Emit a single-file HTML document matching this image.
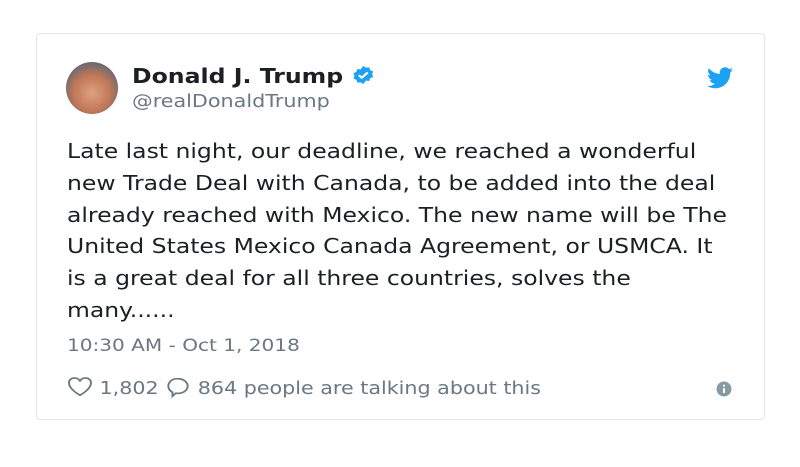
<!DOCTYPE html>
<html><head><style>
body{margin:0;width:800px;height:467px;background:#fff;font-family:"DejaVu Sans",sans-serif;position:relative;overflow:hidden}
.card{position:absolute;left:36px;top:33px;width:729px;height:387px;border:1px solid #e1e8ed;border-radius:4px;box-sizing:border-box}
.av{position:absolute;left:66px;top:62px;width:52px;height:52px;border-radius:50%;background:radial-gradient(circle at 50% 60%,#e0a080 0%,#c07858 45%,#6a6a70 75%,#8ab 100%)}
.s{transform:scaleX(1.18);transform-origin:0 0}
.name{position:absolute;left:132px;top:64px;font-size:20px;font-weight:bold;color:#1c2022;white-space:nowrap}
.handle{position:absolute;left:132px;top:91px;font-size:18px;color:#697882;white-space:nowrap;transform:scaleX(1.15)}
.body{position:absolute;left:67px;top:136px;font-size:20px;line-height:31.8px;color:#1c2022;white-space:nowrap}
.time{position:absolute;left:67px;top:336px;font-size:17px;color:#697882;white-space:nowrap}
.act{position:absolute;left:67px;top:375px;font-size:17.5px;color:#697882;white-space:nowrap}
</style></head><body>
<div class="card"></div>
<div class="av"></div>
<div class="name s">Donald J. Trump <svg width="20" height="22" viewBox="0 0 24 24" style="vertical-align:-3px"><path fill="#1da1f2" d="M12 1l2.6 2.2 3.4-.4 1 3.3 3 1.7-1 3.2 1 3.2-3 1.7-1 3.3-3.4-.4L12 23l-2.6-2.2-3.4.4-1-3.3-3-1.7 1-3.2-1-3.2 3-1.7 1-3.3 3.4.4z"/><path d="M7.5 12.3l3 3 6-6.3" stroke="#fff" stroke-width="2.4" fill="none"/></svg></div>
<div class="handle s" style="transform:scaleX(1.15)">@realDonaldTrump</div>
<svg style="position:absolute;left:707px;top:67px" width="26" height="22" viewBox="0 0 24 20"><path fill="#1da1f2" d="M24 2.4c-.9.4-1.8.6-2.8.8 1-.6 1.8-1.6 2.2-2.7-1 .6-2 1-3.1 1.2A4.9 4.9 0 0 0 11.9 6.2 14 14 0 0 1 1.7 1 4.9 4.9 0 0 0 3.2 7.6a4.9 4.9 0 0 1-2.2-.6c0 2.4 1.7 4.4 3.9 4.8-.7.2-1.5.2-2.2.1.6 2 2.4 3.4 4.6 3.4A9.9 9.9 0 0 1 0 17.3 14 14 0 0 0 7.5 19.5c9 0 14-7.5 14-14v-.6c1-.7 1.8-1.6 2.5-2.5z"/></svg>
<div class="body s" style="transform:scaleX(1.175)">Late last night, our deadline, we reached a wonderful<br>new Trade Deal with Canada, to be added into the deal<br>already reached with Mexico. The new name will be The<br>United States Mexico Canada Agreement, or USMCA. It<br>is a great deal for all three countries, solves the<br>many......</div>
<div class="time s">10:30 AM - Oct 1, 2018</div>
<div class="act s"><svg width="22" height="22" viewBox="0 0 24 22" style="vertical-align:-4px"><path d="M12 20S2 13.5 2 7.5A5 5 0 0 1 12 5a5 5 0 0 1 10 2.5C22 13.5 12 20 12 20z" fill="none" stroke="#697882" stroke-width="1.8"/></svg> 1,802 <svg width="22" height="24" viewBox="0 0 24 24" style="vertical-align:-5px"><path d="M12 3a9 8 0 1 1-2 15.8L7 22v-4.2A8 8 0 0 1 12 3z" fill="none" stroke="#697882" stroke-width="1.8"/></svg> 864 people are talking about this</div>
<svg style="position:absolute;left:716px;top:381px" width="16" height="16" viewBox="0 0 16 16"><circle cx="8" cy="8" r="7.5" fill="#8899a6"/><rect x="7" y="7" width="2" height="5" fill="#fff"/><circle cx="8" cy="4.7" r="1.1" fill="#fff"/></svg>
</body></html>
